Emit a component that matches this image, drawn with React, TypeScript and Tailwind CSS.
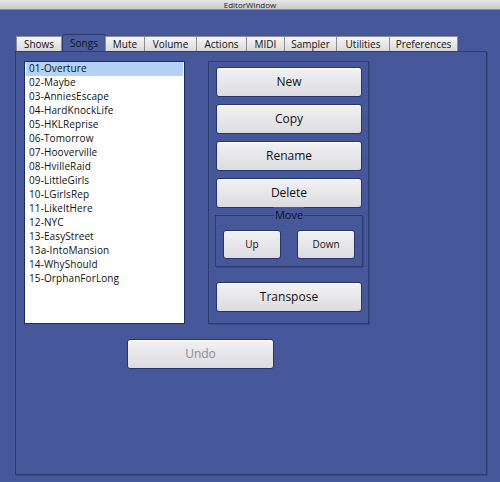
import React from "react";

const tabs: { name: string; w: number }[] = [
  { name: "Shows", w: 46 },
  { name: "Songs", w: 44 },
  { name: "Mute", w: 40 },
  { name: "Volume", w: 53 },
  { name: "Actions", w: 51 },
  { name: "MIDI", w: 39 },
  { name: "Sampler", w: 53 },
  { name: "Utilities", w: 54 },
  { name: "Preferences", w: 69 },
];

const songs = [
  "01-Overture",
  "02-Maybe",
  "03-AnniesEscape",
  "04-HardKnockLife",
  "05-HKLReprise",
  "06-Tomorrow",
  "07-Hooverville",
  "08-HvilleRaid",
  "09-LittleGirls",
  "10-LGirlsRep",
  "11-LikeItHere",
  "12-NYC",
  "13-EasyStreet",
  "13a-IntoMansion",
  "14-WhyShould",
  "15-OrphanForLong",
];

const btn =
  "flex items-center justify-center rounded-[3px] border border-[#27336b] bg-[linear-gradient(#f2f2f4,#dcdce0)] shadow-[inset_0_1px_0_#ffffff] text-[#111]";

function Btn({ label, className, textCls }: { label: string; className: string; textCls?: string }) {
  return (
    <div className={`${btn} ${className}`}>
      <span className={textCls ?? "text-[12px]"}>{label}</span>
    </div>
  );
}

export default function App() {
  return (
    <div
      className="w-[500px] h-[482px] overflow-hidden flex flex-col bg-[#46589a] bg-[repeating-linear-gradient(180deg,#47599b_0px,#47599b_1px,#44569a_1px,#44569a_2px)]"
      style={{ fontFamily: '"Open Sans", "Noto Sans", sans-serif' }}
    >
      {/* title bar */}
      <div className="h-[10px] shrink-0 bg-[linear-gradient(#e6e6e6,#c9c9c9)] border-b border-[#8a8a8a] flex items-center justify-center">
        <span className="text-[8px] leading-[9px] text-[#222]">EditorWindow</span>
      </div>

      {/* tabs */}
      <div className="flex items-end pl-[16px] mt-[24px] h-[17px] relative z-10">
        {tabs.map((t) =>
          t.name === "Songs" ? (
            <div
              key={t.name}
              style={{ width: t.w }}
              className="h-[17px] flex items-center justify-center border border-b-0 border-[#2c3a72] rounded-t-[3px] bg-[#4a5c9e] text-[10px] text-[#111] leading-none"
            >
              {t.name}
            </div>
          ) : (
            <div
              key={t.name}
              style={{ width: t.w }}
              className="h-[15px] flex items-center justify-center border border-[#8d8d95] border-b-0 bg-[linear-gradient(#f6f6f6,#dadada)] text-[10px] text-[#111] leading-none -ml-px first:ml-0"
            >
              {t.name}
            </div>
          )
        )}
      </div>

      {/* panel */}
      <div className="ml-[15px] w-[472px] h-[424px] border border-[#2c3a72] shadow-[1px_1px_0_#3a4a85] flex flex-col">
        <div className="flex pt-[9px] pl-[8px]">
          {/* list */}
          <div className="w-[161px] h-[263px] bg-white border border-[#1c2a66] px-px">
            {songs.map((s, i) => (
              <div
                key={s}
                className={`h-[14px] flex items-center pl-[3px] pb-[2px] text-[10px] leading-none text-[#111] tracking-[0.1px] ${
                  i === 0 ? "bg-[#b4d2f6]" : ""
                }`}
              >
                {s}
              </div>
            ))}
          </div>

          {/* right box */}
          <div className="ml-[23px] w-[161px] h-[263px] border border-[#2c3a72] shadow-[1px_1px_0_#3a4a85] flex flex-col pt-[5px] pl-[7px]">
            <Btn label="New" className="w-[146px] h-[30px]" />
            <Btn label="Copy" className="w-[146px] h-[30px] mt-[7px]" />
            <Btn label="Rename" className="w-[146px] h-[30px] mt-[7px]" />
            <Btn label="Delete" className="w-[146px] h-[30px] mt-[7px]" />
            {/* move group */}
            <div className="relative w-[148px] h-[52px] -ml-px mt-[7px] border border-[#2c3a72] shadow-[1px_1px_0_#3a4a85] flex items-start pt-[14px] pl-[7px] gap-[16px]">
              <span className="absolute left-1/2 -translate-x-1/2 -top-[9px] px-[1px] text-[11px] leading-[16px] text-[#111] bg-[#46589a]">
                Move
              </span>
              <Btn label="Up" className="w-[58px] h-[29px]" textCls="text-[10px]" />
              <Btn label="Down" className="w-[58px] h-[29px]" textCls="text-[10px]" />
            </div>
            <Btn label="Transpose" className="w-[146px] h-[30px] mt-[15px]" />
          </div>
        </div>

        <div className="pl-[111px] pt-[15px]">
          <Btn label="Undo" className="w-[147px] h-[30px]" textCls="text-[12px] text-[#8a8a8a]" />
        </div>
      </div>
    </div>
  );
}
